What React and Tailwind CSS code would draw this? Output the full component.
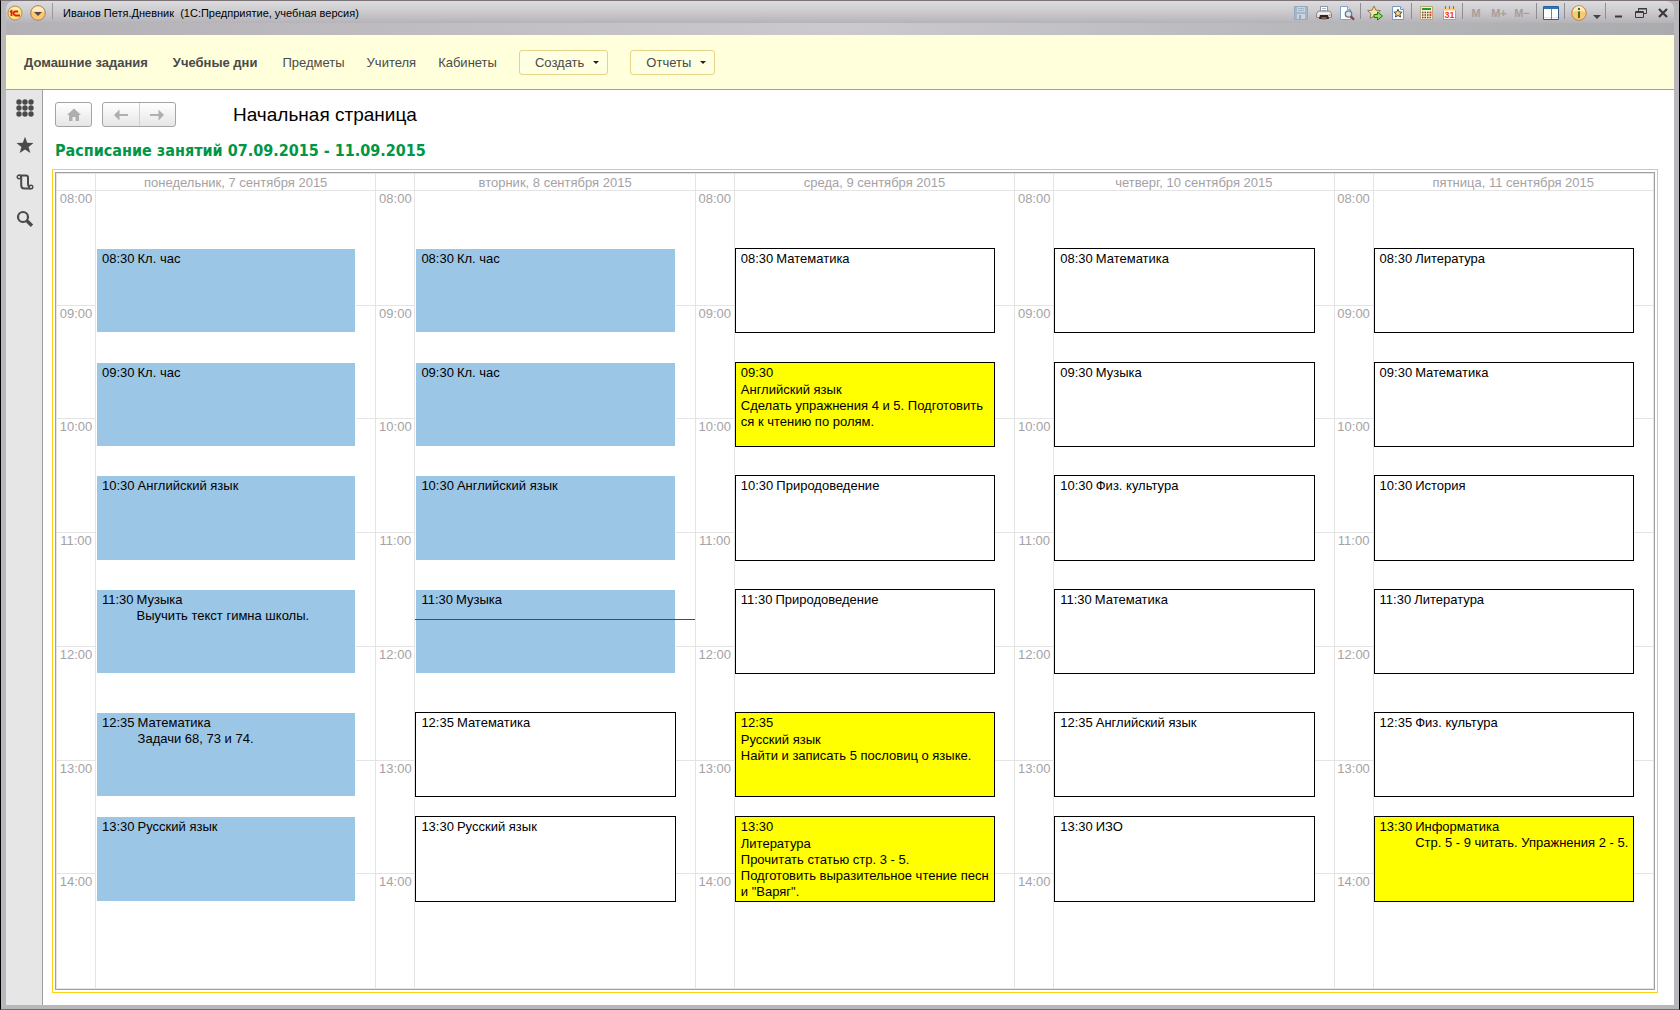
import React from 'react';
import { clsx } from 'clsx';

const HOURS = ['08:00', '09:00', '10:00', '11:00', '12:00', '13:00', '14:00'];
const DAY_START = 8 * 60;
const LESSON = 45;

const DAYS = [
  {
    title: 'понедельник, 7 сентября 2015',
    lessons: [
      { time: '08:30', name: 'Кл. час', kind: 'past' },
      { time: '09:30', name: 'Кл. час', kind: 'past' },
      { time: '10:30', name: 'Английский язык', kind: 'past' },
      { time: '11:30', name: 'Музыка', kind: 'past', note: 'Выучить текст гимна школы.' },
      { time: '12:35', name: 'Математика', kind: 'past', note: 'Задачи 68, 73 и 74.' },
      { time: '13:30', name: 'Русский язык', kind: 'past' },
    ],
  },
  {
    title: 'вторник, 8 сентября 2015',
    now: '11:46',
    lessons: [
      { time: '08:30', name: 'Кл. час', kind: 'past' },
      { time: '09:30', name: 'Кл. час', kind: 'past' },
      { time: '10:30', name: 'Английский язык', kind: 'past' },
      { time: '11:30', name: 'Музыка', kind: 'past' },
      { time: '12:35', name: 'Математика', kind: 'plain' },
      { time: '13:30', name: 'Русский язык', kind: 'plain' },
    ],
  },
  {
    title: 'среда, 9 сентября 2015',
    lessons: [
      { time: '08:30', name: 'Математика', kind: 'plain' },
      { time: '09:30', name: 'Английский язык', kind: 'homework', stacked: true, note: 'Сделать упражнения 4 и 5. Подготовить\nся к чтению по ролям.' },
      { time: '10:30', name: 'Природоведение', kind: 'plain' },
      { time: '11:30', name: 'Природоведение', kind: 'plain' },
      { time: '12:35', name: 'Русский язык', kind: 'homework', stacked: true, note: 'Найти и записать 5 пословиц о языке.' },
      { time: '13:30', name: 'Литература', kind: 'homework', stacked: true, note: 'Прочитать статью стр. 3 - 5.\nПодготовить выразительное чтение песн\nи "Варяг".' },
    ],
  },
  {
    title: 'четверг, 10 сентября 2015',
    lessons: [
      { time: '08:30', name: 'Математика', kind: 'plain' },
      { time: '09:30', name: 'Музыка', kind: 'plain' },
      { time: '10:30', name: 'Физ. культура', kind: 'plain' },
      { time: '11:30', name: 'Математика', kind: 'plain' },
      { time: '12:35', name: 'Английский язык', kind: 'plain' },
      { time: '13:30', name: 'ИЗО', kind: 'plain' },
    ],
  },
  {
    title: 'пятница, 11 сентября 2015',
    lessons: [
      { time: '08:30', name: 'Литература', kind: 'plain' },
      { time: '09:30', name: 'Математика', kind: 'plain' },
      { time: '10:30', name: 'История', kind: 'plain' },
      { time: '11:30', name: 'Литература', kind: 'plain' },
      { time: '12:35', name: 'Физ. культура', kind: 'plain' },
      { time: '13:30', name: 'Информатика', kind: 'homework', note: 'Стр. 5 - 9 читать. Упражнения 2 - 5.' },
    ],
  },
];

const KIND_CLASS = {
  past: 'border-white bg-[#9cc6e6]',
  plain: 'border-black bg-white',
  homework: 'border-black bg-[#ffff00]',
};

// one grid row per minute
function toRow(time) {
  const [h, m] = time.split(':').map(Number);
  return h * 60 + m - DAY_START + 1;
}

function Svg({ size = 16, children }) {
  return (
    <svg width={size} height={size} viewBox={`0 0 ${size} ${size}`} className="shrink-0">
      {children}
    </svg>
  );
}

function SaveIcon() {
  return (
    <Svg>
      <path d="M1.500 1.500h13v13h-13z" fill="#a3b7ca" stroke="#93a9be" />
      <path d="M4 2h8v5H4z" fill="#ccd5de" />
      <path d="M5 3.500h6M5 5.500h6" stroke="#9fb2c6" />
      <path d="M4 9h8v5H4z" fill="#ccd5de" />
      <path d="M6 10h2v4H6z" fill="#93a9be" />
    </Svg>
  );
}

function PrintIcon() {
  return (
    <Svg>
      <path d="M4.500 1.500h7v5h-7z" fill="#fff" stroke="#8c95a5" />
      <path d="M6 3.500h4M6 5.500h4" stroke="#a8b4c8" />
      <path d="M2.500 6h11l2 2.500v4h-15v-4z" fill="#e4e1de" stroke="#8a8585" />
      <path d="M2 8.500h12" stroke="#f5f5f5" />
      <path d="M4 10h8l1 4H3z" fill="#2c2626" />
      <path d="M5.500 12h5v2.500h-5z" fill="#8a5a48" />
      <path d="M13 10h1.500" stroke="#d65a3a" />
    </Svg>
  );
}

function PreviewIcon() {
  return (
    <Svg>
      <path d="M1.500 1.500h7l3 3v10h-10z" fill="#fff" stroke="#7fa3cc" />
      <path d="M8.500 1.500v3h3" fill="#dce9f7" stroke="#7fa3cc" />
      <circle cx="9.500" cy="9" r="3.200" fill="#d5e6f5" stroke="#777" strokeWidth="1.300" />
      <path d="M11.800 11.300l3.200 3.400" stroke="#8a4030" strokeWidth="2.200" />
    </Svg>
  );
}

function StarAddIcon() {
  return (
    <Svg>
      <path d="M7 1l1.900 4.200 4.600.4-3.400 3.100 1 4.600L7 11l-4 2.400 1-4.700L.6 5.600l4.500-.4z" fill="#fbe3a4" stroke="#8d7a60" />
      <path d="M7 9.500h3.500V7l5 4-5 4v-2.500H7z" fill="#8fe05a" stroke="#1c7a12" />
    </Svg>
  );
}

function StarPageIcon() {
  return (
    <Svg>
      <path d="M2.500 1.500h8l3 3v10h-11z" fill="#fff" stroke="#7c98bd" />
      <path d="M10.500 1.500v3h3" fill="#dce9f7" stroke="#7c98bd" />
      <path d="M8 4.200l1.200 2.700 2.900.3-2.200 1.900.7 2.900L8 10.500 5.400 12l.7-2.900-2.200-1.900 2.900-.3z" fill="#fbd978" stroke="#4b4a55" />
    </Svg>
  );
}

function CalcIcon() {
  return (
    <Svg>
      <path d="M2.500 1.500h12v13h-12z" fill="#fdeccc" stroke="#c3a57c" />
      <path d="M4 3h9v2H4z" fill="#18a02c" />
      <path d="M4 7.500h9M4 10h9M4 12.500h9" stroke="#5a4a3a" strokeWidth="1.500" strokeDasharray="1.500 1" />
      <path d="M12 7.500h1.500M12 10h1.500" stroke="#e0462a" strokeWidth="1.500" />
    </Svg>
  );
}

function CalendarIcon() {
  return (
    <Svg>
      <path d="M2.500 2.500h12v12h-12z" fill="#fff" stroke="#c99a63" />
      <path d="M2 2h13v3.500H2z" fill="#f3c98c" />
      <path d="M4.500 1v3M8.500 1v3M12.500 1v3" stroke="#a46b35" />
      <text x="8.500" y="13" textAnchor="middle" fontSize="9" fontWeight="700" fontFamily="Liberation Sans, sans-serif" fill="#f03c14">31</text>
    </Svg>
  );
}

function PanesIcon() {
  return (
    <Svg>
      <path d="M.5 1.500h15v13H.5z" fill="#fff" stroke="#2e5f92" />
      <path d="M1 2h14v2H1z" fill="#2f75b5" />
      <path d="M8.500 4v10" stroke="#5d87b3" />
      <path d="M9 12.500h6M1 12.500h7" stroke="#d7e6f5" />
    </Svg>
  );
}

function InfoIcon() {
  return (
    <Svg>
      <circle cx="8" cy="8" r="7.300" fill="#fbc873" stroke="#b98652" />
      <path d="M2 7a6 6 0 0 1 12 0c-3-1.500-9-1.500-12 0z" fill="#fde9bd" />
      <path d="M7 6.500h2V13H7z" fill="#39751a" />
      <path d="M7 3h2v2H7z" fill="#39751a" />
    </Svg>
  );
}

function ToolButton({ label, disabled, children }) {
  return (
    <button type="button" aria-label={label} disabled={disabled} className="flex h-5 w-[23px] items-center justify-center">
      {children}
    </button>
  );
}

function MemoryButton({ text }) {
  return (
    <button type="button" disabled className="h-5 w-[23px] pr-px text-[11px] font-bold text-[#a99c99]">
      {text}
    </button>
  );
}

function Separator() {
  return <span className="mx-[2px] h-4 w-px self-start bg-[#8f8d92]" />;
}

function TitleBar() {
  return (
    <header className="flex h-[22px] items-center rounded-t-lg bg-linear-to-b from-[#dcdbde] via-[#cbcacd] to-[#b5b3b8] pt-[2px]">
      <button type="button" aria-label="Главное меню" className="flex h-5 w-[18px] items-center justify-center">
        <Svg>
          <circle cx="8" cy="8" r="7" fill="#fde07a" stroke="#b98d4c" />
          <path d="M2.500 5.500a6 5 0 0 1 11 0c-3-1-8-1-11 0z" fill="#fff3c4" />
          <path d="M3 7l1.500-1v5M11 6.500H8.500Q6.500 6.500 6.500 8.300T8.500 10.500H13" fill="none" stroke="#dc1f12" strokeWidth="1.800" />
        </Svg>
      </button>
      <button type="button" aria-label="Сервис" className="ml-[5px] flex h-5 w-[18px] items-center justify-center">
        <Svg>
          <circle cx="8" cy="8" r="7.300" fill="#fbc873" stroke="#a8825c" />
          <path d="M2 6.500a6 5 0 0 1 12 0z" fill="#fdebc8" />
          <path d="M4 7h8l-4 4z" fill="#57493f" />
        </Svg>
      </button>
      <span className="ml-[5px] h-4 w-px self-start bg-[#9a989d]" />
      <h1 className="ml-[10px] text-[11px] leading-4 whitespace-pre text-black">
        Иванов Петя.Дневник  (1С:Предприятие, учебная версия)
      </h1>
      <div className="ml-auto flex items-center">
        <ToolButton label="Сохранить" disabled><SaveIcon /></ToolButton>
        <ToolButton label="Печать"><PrintIcon /></ToolButton>
        <ToolButton label="Просмотр"><PreviewIcon /></ToolButton>
        <Separator />
        <ToolButton label="Добавить в избранное"><StarAddIcon /></ToolButton>
        <ToolButton label="Избранное"><StarPageIcon /></ToolButton>
        <Separator />
        <ToolButton label="Калькулятор"><CalcIcon /></ToolButton>
        <ToolButton label="Календарь"><CalendarIcon /></ToolButton>
        <Separator />
        <MemoryButton text="M" />
        <MemoryButton text="M+" />
        <MemoryButton text="M−" />
        <Separator />
        <ToolButton label="Панели"><PanesIcon /></ToolButton>
        <Separator />
        <ToolButton label="Информация"><InfoIcon /></ToolButton>
        <button type="button" aria-label="Ещё" className="flex h-5 w-[13px] items-end justify-center pb-1">
          <svg width="8" height="4" viewBox="0 0 8 4"><path d="M0 0h8L4 4z" fill="#444" /></svg>
        </button>
        <Separator />
        <button type="button" aria-label="Свернуть" className="flex h-5 w-[22px] items-center justify-center">
          <Svg size={12}><path d="M2 9.500h7" stroke="#3a3a3a" strokeWidth="2" /></Svg>
        </button>
        <button type="button" aria-label="Восстановить" className="flex h-5 w-[22px] items-center justify-center">
          <Svg size={12}>
            <path d="M3.500 4V1.500h8v5H9M3 2h9" fill="none" stroke="#3a3a3a" />
            <path d="M.5 4.500h8v6h-8zM.5 5.500h8" fill="none" stroke="#3a3a3a" />
          </Svg>
        </button>
        <button type="button" aria-label="Закрыть" className="flex h-5 w-[22px] items-center justify-center">
          <Svg size={12}><path d="M2 2l8 8M10 2l-8 8" stroke="#3a3a3a" strokeWidth="2.200" /></Svg>
        </button>
      </div>
    </header>
  );
}

function MenuButton({ children }) {
  return (
    <button type="button" className="flex h-[25px] items-center gap-[9px] rounded-[3px] border border-[#e6d388] bg-[#ffffe1] pr-2 pl-[15px]">
      {children}
      <svg width="6" height="3" viewBox="0 0 6 3"><path d="M0 0h6L3 3z" fill="#222" /></svg>
    </button>
  );
}

function SectionBar() {
  return (
    <nav className="flex h-[55px] items-center gap-[25px] border-b border-[#a0a0a0] bg-[#ffffdc] pt-px pl-[18px] text-[13px] text-[#4a4a4a]">
      <a href="#homework" className="font-bold">Домашние задания</a>
      <a href="#days" className="font-bold">Учебные дни</a>
      <div className="flex items-center gap-[22px]">
        <a href="#subjects">Предметы</a>
        <a href="#teachers">Учителя</a>
        <a href="#rooms">Кабинеты</a>
        <MenuButton>Создать</MenuButton>
        <MenuButton>Отчеты</MenuButton>
      </div>
    </nav>
  );
}

function Sidebar() {
  return (
    <aside className="flex w-[37px] shrink-0 flex-col items-center gap-[19px] border-r border-[#a0a0a0] bg-[#e6e6e6] pt-[9px] pl-px">
      <button type="button" aria-label="Разделы">
        <Svg size={18}>
          <g fill="#4a4a4a">
            {[3, 9, 15].map((y) => [3, 9, 15].map((x) => <circle key={`${x}-${y}`} cx={x} cy={y} r="2.700" />))}
          </g>
        </Svg>
      </button>
      <button type="button" aria-label="Избранное">
        <Svg size={18}><path d="M9 .8l2.200 5.900 6.300.3-4.900 3.900 1.700 6.100L9 13.600 3.700 17l1.700-6.100L.5 7l6.300-.3z" fill="#4a4a4a" /></Svg>
      </button>
      <button type="button" aria-label="История">
        <Svg size={18}>
          <path d="M2.500 2.500H10q2 0 2 2V11q0 3 3 3M5.200 3v9q0 3.500 3 3.500h7" fill="none" stroke="#4a4a4a" strokeWidth="2" />
          <circle cx="3" cy="4" r="1.800" fill="#e6e6e6" stroke="#4a4a4a" strokeWidth="1.400" />
          <circle cx="15" cy="14" r="1.800" fill="#e6e6e6" stroke="#4a4a4a" strokeWidth="1.400" />
        </Svg>
      </button>
      <button type="button" aria-label="Поиск">
        <Svg size={18}>
          <circle cx="7" cy="7" r="5" fill="none" stroke="#4a4a4a" strokeWidth="2.200" />
          <path d="M10.800 10.800l5.200 5" stroke="#4a4a4a" strokeWidth="3.400" />
        </Svg>
      </button>
    </aside>
  );
}

function Lesson({ time, name, note, kind, stacked }) {
  const row = toRow(time);
  return (
    <article
      className={clsx('col-start-1 mr-[19px] overflow-hidden border px-[5px] pt-[2px] text-[13px] leading-4 text-black', KIND_CLASS[kind], !stacked && 'flex gap-[3px]')}
      style={{ gridRow: `${row} / ${row + LESSON}` }}
    >
      <time className={clsx(stacked && 'mb-px block')}>{time}</time>
      <div>
        <h3>{name}</h3>
        {note && <p className="whitespace-pre">{note}</p>}
      </div>
    </article>
  );
}

function Day({ title, lessons, now }) {
  return (
    <section className="grid min-w-0 grid-cols-[38px_minmax(0,1fr)] grid-rows-[17px_minmax(0,1fr)] border-l border-[#e4e4e4]">
      <div className="border-b border-[#e4e4e4]" />
      <h2 className="border-b border-l border-[#e4e4e4] text-center text-[13px] leading-[17px] text-[#a5a2a5]">{title}</h2>
      <div className="grid grid-rows-7 pb-px text-[13px] leading-4 text-[#a5a2a5]">
        {HOURS.map((h) => (
          <span key={h} className="border-t border-[#e4e4e4] text-center first:border-t-0">{h}</span>
        ))}
      </div>
      <div className="grid grid-cols-1 grid-rows-[repeat(420,minmax(0,1fr))] border-l border-[#e4e4e4] pb-px">
        {HOURS.slice(1).map((h) => (
          <div key={h} className="col-start-1 border-t border-[#e4e4e4]" style={{ gridRow: `${toRow(h)} / span 60` }} />
        ))}
        {lessons.map((l) => <Lesson key={l.time} {...l} />)}
        {now && <div className="col-start-1 border-t border-[#ff0000]" style={{ gridRow: `${toRow(now)} / span 1` }} />}
      </div>
    </section>
  );
}

function PageHeader() {
  return (
    <div className="flex items-center">
      <button type="button" aria-label="Домой" className="flex h-[25px] w-[37px] items-center justify-center rounded-[3px] border border-[#a5a3a5] bg-linear-to-b from-white to-[#e6e6e6]">
        <Svg><path d="M8 1.500l7 6.500h-2v6H9.500v-4h-3v4H3V8H1z" fill="#b0aeb0" /></Svg>
      </button>
      <div className="ml-[10px] flex h-[25px] w-[74px] rounded-[3px] border border-[#a5a3a5] bg-linear-to-b from-white to-[#e6e6e6]">
        <button type="button" aria-label="Назад" className="flex flex-1 items-center justify-center border-r border-[#d0d0d0]">
          <Svg><path d="M1 8l5.500-5.500V7H15v2H6.500v4.500z" fill="#b0aeb0" /></Svg>
        </button>
        <button type="button" aria-label="Вперед" className="flex flex-1 items-center justify-center">
          <Svg><path d="M15 8L9.500 2.500V7H1v2h8.500v4.500z" fill="#b0aeb0" /></Svg>
        </button>
      </div>
      <h2 className="ml-[57px] pt-px text-[19px] leading-6 text-black">Начальная страница</h2>
    </div>
  );
}

export default function App() {
  return (
    <div className="flex h-screen flex-col border-x border-t border-b border-x-black border-t-[#7b7278] border-b-[#6d6d70] bg-[#b9b7bb] px-[5px] pb-1 font-['Liberation_Sans',Arial,sans-serif]">
      <TitleBar />
      <div className="h-3 shrink-0 bg-linear-to-r from-[#b3b1b6] via-[#cbc9cb] to-[#a9abad]" />
      <SectionBar />
      <div className="flex min-h-0 flex-1">
        <Sidebar />
        <main className="flex min-w-0 flex-1 flex-col bg-white pt-3 pr-4 pb-3 pl-[9px]">
          <div className="pl-[3px]">
            <PageHeader />
            <h2 className="mt-3 text-[16px] leading-6 font-bold text-[#009646] font-['DejaVu_Sans_Condensed','DejaVu_Sans',sans-serif]">
              Расписание занятий 07.09.2015 - 11.09.2015
            </h2>
          </div>
          <div className="mt-[6px] flex min-h-0 flex-1 border border-[#fcd116] p-[2px]">
            <div className="flex flex-1 border border-[#a0a0a0]">
              <div className="grid flex-1 grid-cols-5 border-y border-r border-[#e4e4e4]">
                {DAYS.map((d) => <Day key={d.title} {...d} />)}
              </div>
            </div>
          </div>
        </main>
      </div>
    </div>
  );
}
